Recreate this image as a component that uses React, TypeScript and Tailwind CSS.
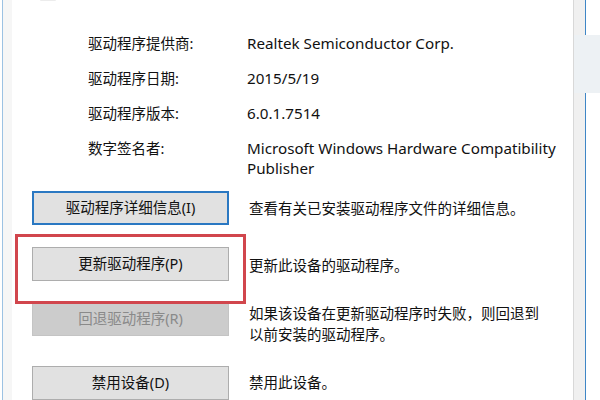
const info = [
  { label: "驱动程序提供商:", value: ["Realtek Semiconductor Corp."] },
  { label: "驱动程序日期:", value: ["2015/5/19"] },
  { label: "驱动程序版本:", value: ["6.0.1.7514"] },
  { label: "数字签名者:", value: ["Microsoft Windows Hardware Compatibility", "Publisher"] },
];

function Btn({ label, kind }: { label: string; kind?: "focus" | "disabled" }) {
  const base =
    "w-[197px] h-[34px] shrink-0 flex items-center justify-center text-[14.5px]";
  if (kind === "focus")
    return (
      <div className={`${base} bg-[#e1e1e1] border-2 border-[#2a78c2] text-[#111]`}>
        {label}
      </div>
    );
  if (kind === "disabled")
    return (
      <div className={`${base} bg-[#cccccc] border border-[#c4c4c4] text-[#8a8a8a]`}>
        {label}
      </div>
    );
  return (
    <div className={`${base} bg-[#e1e1e1] border border-[#adadad] text-[#111]`}>
      {label}
    </div>
  );
}

export default function App() {
  return (
    <div
      className="relative w-[600px] h-[400px] overflow-hidden bg-white flex text-[#111]"
      style={{ fontFamily: '"Noto Sans", "Noto Sans CJK SC", sans-serif' }}
    >
      {/* left window edge */}
      <div className="w-[2px] shrink-0 bg-white" />
      <div className="w-px shrink-0 bg-[#9cc2e3]" />
      <div className="w-[9px] shrink-0 bg-[#f6f6f6]" />

      {/* main panel */}
      <div className="relative flex-1 flex flex-col">
        <div className="ml-[28px] w-[16px] h-[4px] rounded-b-sm bg-[#ececec]" />

        {/* driver info */}
        <div className="pl-[76px] pt-[32px] flex flex-col gap-[15px]">
          {info.map((r) => (
            <div key={r.label} className="flex leading-[20px]">
              <div className="w-[159px] shrink-0 text-[14.5px]">{r.label}</div>
              <div className="text-[15.2px]">
                {r.value.map((v) => (
                  <div key={v}>{v}</div>
                ))}
              </div>
            </div>
          ))}
        </div>

        {/* actions */}
        <div className="pl-[20px] pt-[13px] flex flex-col gap-[22px] text-[14.5px]">
          <div className="flex items-center gap-[20px]">
            <Btn label="驱动程序详细信息(I)" kind="focus" />
            <div className="pt-[1px]">查看有关已安装驱动程序文件的详细信息。</div>
          </div>

          <div className="relative flex items-center gap-[20px]">
            <div className="absolute -left-[17px] -top-[13px] w-[231px] h-[70px] border-[3px] border-[#d1464d]" />
            <Btn label="更新驱动程序(P)" />
            <div className="pt-[3px]">更新此设备的驱动程序。</div>
          </div>

          <div className="flex items-start gap-[20px] -mt-[1px]">
            <Btn label="回退驱动程序(R)" kind="disabled" />
            <div className="leading-[21px] pt-[1px]">
              <div>如果该设备在更新驱动程序时失败，则回退到</div>
              <div>以前安装的驱动程序。</div>
            </div>
          </div>

          <div className="flex items-center gap-[20px] -mt-[1px]">
            <Btn label="禁用设备(D)" />
            <div>禁用此设备。</div>
          </div>
        </div>
      </div>

      {/* right window edge */}
      <div className="w-px shrink-0 bg-[#d8d8d8]" />
      <div className="w-[11px] shrink-0 bg-[#f0f0f0]" />
      <div className="w-px shrink-0 bg-[#3f86c6]" />
      <div className="w-[14px] shrink-0 bg-white" />
      <div className="absolute right-0 top-[35px] w-[26px] h-[58px] bg-[#edf1f4]" />
    </div>
  );
}
